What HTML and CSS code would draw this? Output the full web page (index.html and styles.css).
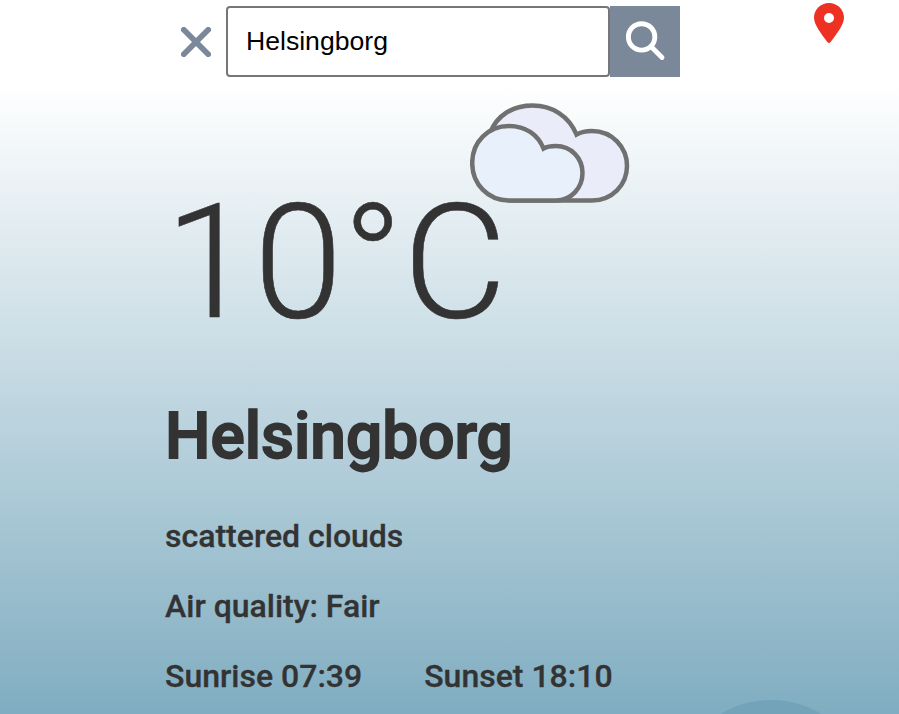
FILE: index.html
```
<!DOCTYPE html>
<html lang="en">
<head>
<meta charset="utf-8">
<title>Weather</title>
<link rel="stylesheet" href="styles.css">
</head>
<body>
<header class="search-bar">
  <button class="clear" type="button" aria-label="Clear">
    <svg width="30" height="30" viewBox="0 0 30 30"><path d="M2.8 2.8 27.2 27.2M27.2 2.8 2.8 27.2"/></svg>
  </button>
  <input class="search-input" type="text" value="Helsingborg" aria-label="City">
  <button class="search-button" type="button" aria-label="Search">
    <svg width="70" height="71" viewBox="0 0 70 71"><circle cx="31.6" cy="30.9" r="13.2"/><path d="M41 40.500 52 51.500"/></svg>
  </button>
  <svg class="pin" width="30" height="40" viewBox="0 0 30 40"><path fill-rule="evenodd" d="M15 0C6.7 0 0 6.5 0 14.8C0 22 7.8 31.5 13.200 38.8Q15 41.2 16.800 38.8C22.2 31.5 30 22 30 14.8C30 6.5 23.3 0 15 0ZM15 10a5 5 0 1 1 0 10a5 5 0 1 1 0-10Z"/></svg>
</header>
<main class="weather">
  <svg class="clouds" width="160" height="101" viewBox="0 0 160 101">
    <path fill="#eaedf9" d="M20 30C27 12 43 2.500 62.500 2.500C82 2.500 99 13 106.500 31.500C111 29 116 28 122 28C142 28 157 44 157 63C157 82 142 97.500 122 97.500H41C21 97.500 12 50 20 30Z"/>
    <path fill="#e8f0fb" d="M39 23C56 23 68 32 73.500 45.500C77 43.500 81 43 86 43C101 43 112.500 55 112.500 70C112.500 85 101 97.500 86 97.500H39C18 97.500 2.200 81 2.200 60C2.200 39 18 23 39 23Z"/>
  </svg>
  <div class="temperature">10°C</div>
  <h1>Helsingborg</h1>
  <p>scattered clouds</p>
  <p>Air quality: Fair</p>
  <div class="sun"><p>Sunrise 07:39</p><p>Sunset 18:10</p></div>
</main>
<div class="bubble"></div>
</body>
</html>
```
FILE: styles.css
```
* { box-sizing: border-box; }
html, body { height: 714px; }
body {
  margin: 0;
  position: relative;
  overflow: hidden;
  color: #333;
  font-family: Roboto, sans-serif;
  background: linear-gradient(#fff 84px, #80adc1 714px);
}
.search-bar {
  display: flex;
  align-items: flex-start;
  height: 84px;
  padding: 6px 55px 0 181px;
}
button { border: 0; padding: 0; background: none; }
svg { display: block; }
.clear { margin: 21px 15px 0 0; }
.clear path { fill: none; stroke: #7a8899; stroke-width: 5.700; stroke-linecap: round; }
.search-input {
  width: 384px;
  height: 71px;
  padding: 0 18px 1px;
  border: 2px solid #767676;
  border-radius: 4px;
  background: #fff;
  color: #000;
  font: 26.600px "Liberation Sans", sans-serif;
}
.search-button { width: 70px; height: 71px; background: #7a8899; }
.search-button svg { fill: none; stroke: #fff; stroke-width: 4.900; stroke-linecap: round; }
.pin { margin: -3px 0 0 auto; fill: #ed3224; }
.weather { position: relative; height: 630px; padding: 84px 0 0 165px; }
.clouds { position: absolute; left: 470px; top: 19px; stroke: #707070; stroke-width: 4.500; stroke-linejoin: miter; }
.temperature { height: 188px; font-size: 160px; font-weight: 300; line-height: 189px; -webkit-text-stroke: 0.6px #333; }
h1 { height: 76px; margin: 43px 0 42px; font-size: 64px; line-height: 76px; font-weight: 500; -webkit-text-stroke: 1.8px #333; }
p { margin: 0 0 32px; font-size: 32px; line-height: 38px; font-weight: 500; -webkit-text-stroke: 0.3px #333; }
.sun { display: flex; gap: 62px; }
.sun p { margin: 0; }
.bubble {
  position: absolute;
  left: 672px;
  top: 700px;
  width: 198px;
  height: 14px;
  background: radial-gradient(circle at 99px 99px, #72a3b9 98.5px, transparent 99.5px);
}
```
